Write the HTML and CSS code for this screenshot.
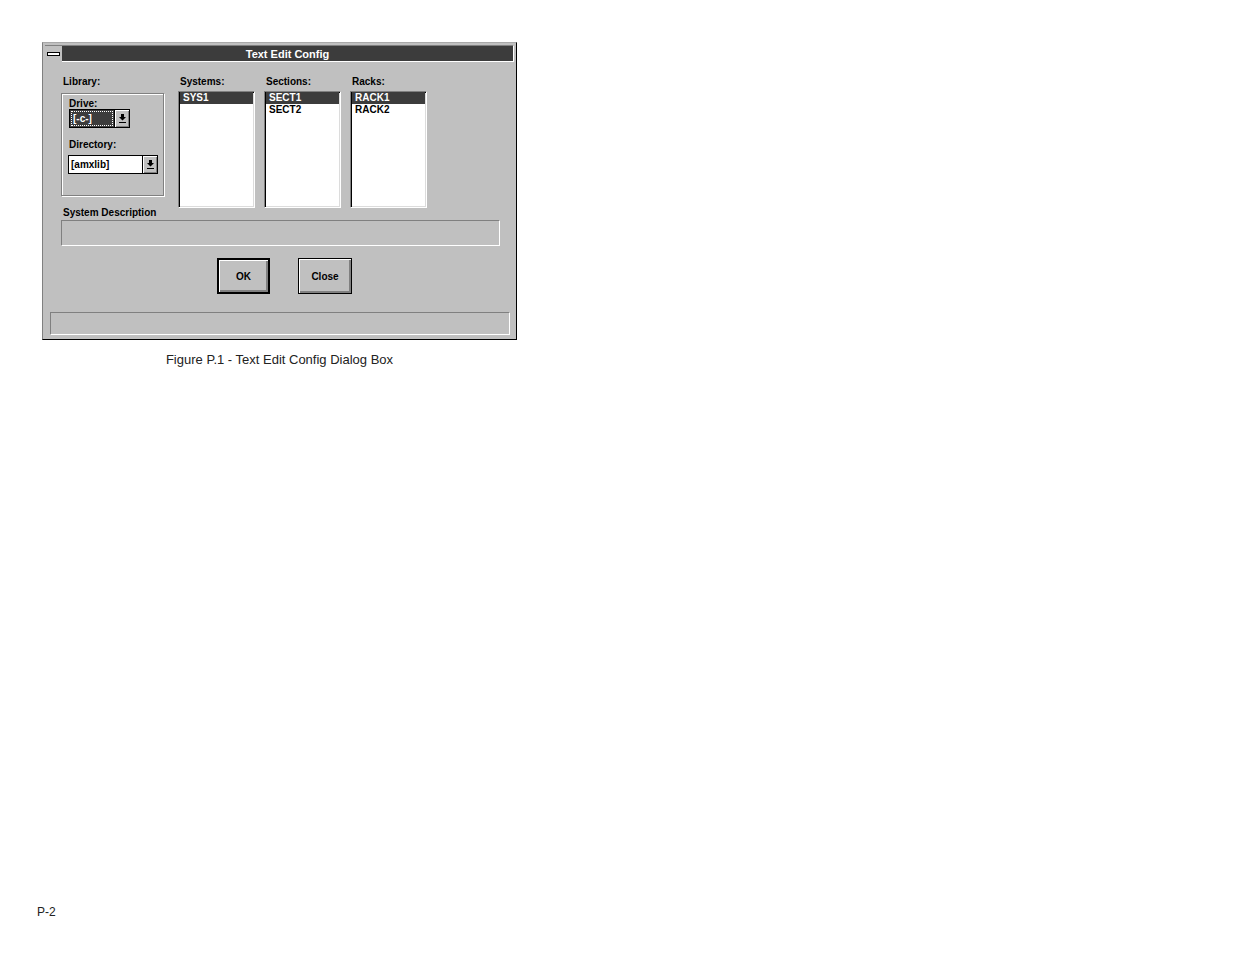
FILE: index.html
```html
<!DOCTYPE html>
<html>
<head>
<meta charset="utf-8">
<title>Text Edit Config</title>
<link rel="stylesheet" href="styles.css">
</head>
<body>
<div class="page">
  <div class="dialog">
    <div class="titlebar">
      <div class="sysmenu"><span class="sysbar"></span></div>
      <div class="title">Text Edit Config</div>
    </div>
    <div class="body">
      <div class="toprow">
        <div class="libcol">
          <div class="label">Library:</div>
          <div class="group">
            <div class="glabel">Drive:</div>
            <div class="combo drive">
              <div class="field sel"><span class="focus">[-c-]</span></div>
              <div class="dropbtn"><svg width="7" height="9" viewBox="0 0 7 9"><path d="M2 0h3v3h2L3.5 6.5 0 3h2z" fill="#000"/><rect x="0" y="8" width="7" height="1" fill="#000"/></svg></div>
            </div>
            <div class="glabel dirlabel">Directory:</div>
            <div class="combo dir">
              <div class="field">[amxlib]</div>
              <div class="dropbtn"><svg width="7" height="9" viewBox="0 0 7 9"><path d="M2 0h3v3h2L3.5 6.5 0 3h2z" fill="#000"/><rect x="0" y="8" width="7" height="1" fill="#000"/></svg></div>
            </div>
          </div>
        </div>
        <div class="listcol">
          <div class="label">Systems:</div>
          <div class="listbox">
            <div class="item sel">SYS1</div>
          </div>
        </div>
        <div class="listcol">
          <div class="label">Sections:</div>
          <div class="listbox">
            <div class="item sel">SECT1</div>
            <div class="item">SECT2</div>
          </div>
        </div>
        <div class="listcol">
          <div class="label">Racks:</div>
          <div class="listbox">
            <div class="item sel">RACK1</div>
            <div class="item">RACK2</div>
          </div>
        </div>
      </div>
      <div class="desclabel">System Description</div>
      <div class="descbox"></div>
      <div class="buttons">
        <div class="btn default">OK</div>
        <div class="btn">Close</div>
      </div>
      <div class="status"></div>
    </div>
  </div>
  <div class="caption">Figure P.1 - Text Edit Config Dialog Box</div>
</div>
<div class="pageno">P-2</div>
</body>
</html>
```

FILE: styles.css
```css
html, body {
  margin: 0;
  padding: 0;
  background: #fff;
}
body {
  font-family: "Liberation Sans", Arial, sans-serif;
  color: #000;
}
.page {
  padding: 42px 0 0 42px;
}
.dialog {
  width: 475px;
  height: 298px;
  box-sizing: border-box;
  background: #c0c0c0;
  border: 1px solid;
  border-color: #a8a8a8 #000 #000 #808080;
  padding: 2px;
  display: flex;
  flex-direction: column;
}
.titlebar {
  display: flex;
  height: 17px;
  flex: none;
}
.sysmenu {
  width: 17px;
  box-sizing: border-box;
  background: #c0c0c0;
  border-top: 1px solid #808080;
  display: flex;
  align-items: center;
  justify-content: center;
}
.sysbar {
  display: block;
  width: 13px;
  height: 4px;
  box-sizing: border-box;
  border: 1px solid #000;
  background: #fff;
}
.title {
  flex: 1;
  box-sizing: border-box;
  background: #3c3c3c;
  color: #fff;
  font: bold 11px/13px "Liberation Sans", Arial, sans-serif;
  text-align: center;
  padding-top: 2px;
  border-top: 1px solid #808080;
  border-right: 1px solid #fff;
  border-bottom: 1px solid #fff;
}
.body {
  flex: 1;
  display: flex;
  flex-direction: column;
  padding-top: 14px;
}
.toprow {
  display: flex;
  margin-left: 16px;
}
.label, .glabel, .desclabel, .item, .field, .btn {
  font-family: "Liberation Sans", Arial, sans-serif;
  font-weight: bold;
  font-size: 10px;
}
.label {
  line-height: 12px;
  height: 12px;
  padding-left: 2px;
  white-space: nowrap;
}
.libcol {
  width: 103px;
  margin-right: 14px;
}
.listcol {
  width: 77px;
  margin-right: 9px;
}
.group {
  margin-top: 5px;
  height: 103px;
  box-sizing: border-box;
  border: 1px solid #808080;
  box-shadow: inset 1px 1px 0 #fff, 1px 1px 0 #fff;
  padding: 4px 0 0 7px;
}
.glabel {
  line-height: 11px;
  height: 11px;
}
.dirlabel {
  margin-top: 11px;
}
.combo {
  display: flex;
  height: 19px;
  box-sizing: border-box;
  border: 1px solid #000;
  background: #fff;
}
.drive {
  width: 61px;
}
.dir {
  width: 90px;
  margin-left: -1px;
  margin-top: 5px;
}
.field {
  flex: 1;
  line-height: 17px;
  padding-left: 2px;
  white-space: nowrap;
  overflow: hidden;
}
.field.sel {
  background: #3c3c3c;
  color: #fff;
  padding: 1px;
}
.focus {
  display: block;
  height: 100%;
  box-sizing: border-box;
  border: 1px dotted #fff;
  line-height: 13px;
  padding-left: 1px;
}
.dropbtn {
  width: 15px;
  flex: none;
  box-sizing: border-box;
  border-left: 1px solid #000;
  background: #c0c0c0;
  box-shadow: inset 1px 1px 0 #fff, inset -1px -1px 0 #808080;
  display: flex;
  align-items: center;
  justify-content: center;
}
.listbox {
  margin-top: 3px;
  height: 117px;
  box-sizing: border-box;
  background: #fff;
  border: 1px solid;
  border-color: #808080 #fff #fff #808080;
  box-shadow: inset 1px 1px 0 #000, inset -1px -1px 0 #dcdcdc;
  padding: 0 1px 0 1px;
}
.item {
  height: 12px;
  line-height: 12px;
  padding-left: 3px;
  white-space: nowrap;
}
.item.sel {
  background: #3c3c3c;
  color: #fff;
}
.desclabel {
  margin-left: 18px;
  line-height: 10px;
  height: 10px;
}
.descbox {
  margin: 2px 0 0 16px;
  width: 439px;
  height: 26px;
  box-sizing: border-box;
  border: 1px solid;
  border-color: #808080 #fff #fff #808080;
}
.buttons {
  display: flex;
  gap: 28px;
  margin-top: 12px;
  padding-left: 172px;
}
.btn {
  width: 53px;
  height: 36px;
  box-sizing: border-box;
  border: 1px solid #000;
  background: #c0c0c0;
  box-shadow: inset 1px 1px 0 #fff, inset -2px -2px 0 #808080;
  display: flex;
  align-items: center;
  justify-content: center;
}
.btn.default {
  border-width: 2px;
}
.btn + .btn {
  width: 54px;
}
.status {
  margin: 18px 0 0 5px;
  width: 460px;
  height: 23px;
  box-sizing: border-box;
  border: 1px solid;
  border-color: #808080 #fff #fff #808080;
}
.caption {
  width: 475px;
  margin-top: 12px;
  text-align: center;
  font: 13px/15px "Liberation Sans", Arial, sans-serif;
  color: #222;
}
.pageno {
  margin: 538px 0 0 37px;
  font: 12px/14px "Liberation Sans", Arial, sans-serif;
  color: #222;
}
```
